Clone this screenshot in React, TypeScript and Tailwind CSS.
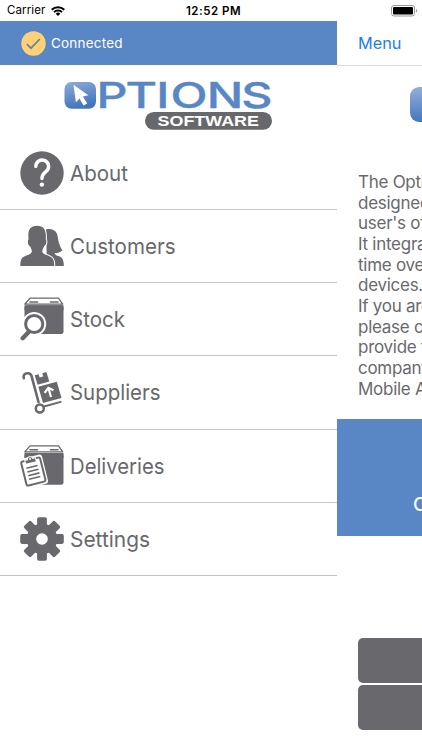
import type { ReactNode } from "react";

const GREY = "#69696d";
const BLUE = "#5987c5";

function AboutIcon() {
  return (
    <svg viewBox="0 0 44 44" className="h-11 w-11" aria-hidden>
      <circle cx="22" cy="22" r="21.7" fill={GREY} />
      <path
        d="M15.800 15.400a6.400 6.400 0 1 1 10.400 5c-2.600 2.100-4.300 3.100-4.300 7.200"
        fill="none"
        stroke="#fff"
        strokeWidth="3.400"
        strokeLinecap="round"
      />
      <circle cx="21.900" cy="33.600" r="2.200" fill="#fff" />
    </svg>
  );
}

function CustomersIcon() {
  return (
    <svg viewBox="0 0 44 44" className="h-11 w-11" fill={GREY} aria-hidden>
      <path d="M26 5.500c6-1.600 11 1.300 11.700 7 .5 4.500 1.900 10 4.700 14-1.700 1.700-4.700 2.600-7.700 2.600 0 1.700 1.600 2.300 3.700 3 3.300 1.100 5.300 3 5.500 9.900H27z" />
      <path
        d="M.3 42c0-6.200 1-8.600 5.500-10.300 3.200-1.200 5.700-1.700 6-4.200.2-1.700-1-3.200-1.700-5.300-1.500-.4-2.300-2.200-2.200-5 0-1 .4-1.500.7-1.900C7.500 7 9.500 1.800 17 1.800S26.600 7 25.700 15.300c.5.500.8 1.200.7 2.300-.1 2.600-1.200 4.200-2.300 4.700-.8 2.200-2 3.500-1.800 5.200.3 2.500 3 3 6.200 4.200 4.500 1.700 5.800 4.100 5.800 10.300z"
        stroke="#fff"
        strokeWidth="2"
        paintOrder="stroke"
      />
    </svg>
  );
}

function BoxShape({ bottom }: { bottom: number }) {
  return (
    <>
      <path d="M10 1.200h28.500l4.200 6H4.800z" fill="#fff" stroke={GREY} strokeWidth="1.300" strokeLinejoin="round" />
      <path d="M10 5h7.500M30.500 5h7.500" stroke={GREY} strokeWidth="1.600" strokeLinecap="round" />
      <rect x="4.500" y="8.200" width="39" height={bottom - 8.2} rx="2.500" fill={GREY} />
      <path d="M4.500 8.200h39v5h-39z" fill={GREY} />
    </>
  );
}

function StockIcon() {
  return (
    <svg viewBox="0 0 44 44" className="h-11 w-11" aria-hidden>
      <BoxShape bottom={37} />
      <circle cx="14.200" cy="27" r="12" fill="#fff" />
      <path d="M9 33l-7 8" stroke="#fff" strokeWidth="7" />
      <circle cx="14.200" cy="27" r="8.600" fill="#fff" stroke={GREY} strokeWidth="3" />
      <path d="M8.200 35.500l-5.500 5.700" stroke={GREY} strokeWidth="4.400" strokeLinecap="round" />
    </svg>
  );
}

function SuppliersIcon() {
  return (
    <svg viewBox="0 0 44 44" className="h-11 w-11" fill="none" aria-hidden>
      <path
        d="M3.800 8.300C3 4.800 4.600 3.500 7.500 3.200c2.300-.2 3.400.7 4 2.600L18.500 32"
        stroke={GREY}
        strokeWidth="2.600"
        strokeLinecap="round"
      />
      <path d="M14.700 5.300l4-1.100.9 3.200 3.600-1-.9-3.200 4.100-1.100 2.900 9.500-11.700 3.200z" fill={GREY} />
      <path d="M18.300 16.700l18.500-5 4.700 16.200-18.500 5z" fill={GREY} />
      <path d="M31 27l-2.400-8.300m-4 4.100l3.700-5 5.200 2.500" stroke="#fff" strokeWidth="2.200" />
      <path d="M24 36.500l16.700-4.600" stroke={GREY} strokeWidth="2" strokeLinecap="round" />
      <circle cx="19.800" cy="38.500" r="4" stroke={GREY} strokeWidth="2.500" />
    </svg>
  );
}

function DeliveriesIcon() {
  return (
    <svg viewBox="0 0 44 44" className="h-11 w-11" aria-hidden>
      <g transform="translate(0 .7)">
        <BoxShape bottom={40} />
      </g>
      <g transform="rotate(-14 13 28)">
        <rect x="1.500" y="12.500" width="24" height="30" rx="3" fill="#fff" />
        <rect x="3.700" y="15.300" width="19.500" height="24.700" rx="1.800" fill="#fff" stroke={GREY} strokeWidth="2" />
        <path
          d="M7.800 18.800v-4h2.700c.1-3.200 5.400-3.200 5.500 0h2.800v4z"
          fill={GREY}
          stroke="#fff"
          strokeWidth="1"
        />
        <circle cx="13.300" cy="14.600" r="1" fill="#fff" />
        <path d="M7.500 22.800h11.500M7.500 26.600h11.500M7.500 30.400h11.500M7.500 34.200h11.500" stroke={GREY} strokeWidth="1.600" />
      </g>
    </svg>
  );
}

function SettingsIcon() {
  return (
    <svg viewBox="0 0 44 44" className="h-11 w-11" fill={GREY} aria-hidden>
      {[0, 45, 90, 135].map((angle) => (
        <rect key={angle} x="17.100" y="0.200" width="9.800" height="43.600" rx="1.800" transform={`rotate(${angle} 22 22)`} />
      ))}
      <circle cx="22" cy="22" r="15.300" />
      <circle cx="22" cy="22" r="5.800" fill="#fff" />
    </svg>
  );
}

const menuItems: { label: string; icon: ReactNode; width: number }[] = [
  { label: "About", icon: <AboutIcon />, width: 58 },
  { label: "Customers", icon: <CustomersIcon />, width: 105.5 },
  { label: "Stock", icon: <StockIcon />, width: 55 },
  { label: "Suppliers", icon: <SuppliersIcon />, width: 90.5 },
  { label: "Deliveries", icon: <DeliveriesIcon />, width: 94.5 },
  { label: "Settings", icon: <SettingsIcon />, width: 80 },
];

const aboutLines = [
  "The Options",
  "designed for",
  "user's of the",
  "It integrates",
  "time over",
  "devices.",
  "If you are",
  "please contact",
  "provide the",
  "company",
  "Mobile App",
];

function StatusBar() {
  return (
    <div className="flex h-[21px] items-center justify-between bg-white pr-1 pl-[7px] text-black">
      <div className="flex w-32 items-center gap-1.5 pt-px text-[11.500px]">
        <span className="tracking-[0.100px]">Carrier</span>
        <svg viewBox="0 0 14 10" className="h-2.5 w-3.5" fill="none" stroke="#000" strokeWidth="2" aria-hidden>
          <path d="M.7 3.700a9 9 0 0 1 12.600 0M3 6.100a5.700 5.700 0 0 1 8 0" />
          <path d="M4.700 7.700a3.300 3.300 0 0 1 4.600 0L7 10z" fill="#000" stroke="none" />
        </svg>
      </div>
      <span className="pt-[2px] pl-[2px] text-[11.500px] font-semibold tracking-[0.500px]">12:52 PM</span>
      <div className="flex w-32 justify-end">
        <svg viewBox="0 0 27 12" className="h-3 w-[27px]" aria-hidden>
          <rect x=".5" y=".5" width="23" height="10.500" rx="2.500" fill="#fff" stroke="#999" />
          <rect x="2" y="2" width="20" height="7.500" rx="1.200" />
          <path d="M25 4v3.500c1.500-.5 1.500-3 0-3.500" fill="#999" />
        </svg>
      </div>
    </div>
  );
}

function Logo() {
  return (
    <svg viewBox="0 0 216 58" className="h-[58px] w-[216px]" role="img" aria-label="Options Software">
      <defs>
        <linearGradient id="tile" x1="0" y1="0" x2="0.300" y2="1">
          <stop offset="0" stopColor="#8fabd9" />
          <stop offset="1" stopColor="#4377bd" />
        </linearGradient>
      </defs>
      <rect x="4.500" y="6" width="31.500" height="26.700" rx="7" fill="url(#tile)" />
      <path d="M13.500 8.800L28.300 19.300l-5.400 1.200 4.300 7-3.700 2.100-4-7-3.600 3.700z" fill="#fff" />
      {/* each glyph has its own x, the wordmark is wider than the typeface */}
      <text
        transform="scale(1.360 1)"
        x="26.800 48.200 70.800 81.200 107.900 133.300"
        y="32.200"
        fill={BLUE}
        stroke={BLUE}
        strokeWidth="0.400"
        fontFamily="Inter, sans-serif"
        fontWeight="500"
        fontSize="35.500"
      >
        PTIONS
      </text>
      <rect x="85" y="36" width="127" height="17.800" rx="8.900" fill="#67686b" />
      <text
        x="97.500"
        y="50.300"
        textLength="101.500"
        lengthAdjust="spacingAndGlyphs"
        fill="#fff"
        fontFamily="Liberation Sans, sans-serif"
        fontWeight="700"
        fontSize="15.300"
      >
        SOFTWARE
      </text>
    </svg>
  );
}

export default function App() {
  return (
    <div className="flex h-[750px] w-[422px] flex-col overflow-hidden bg-white font-['Inter',sans-serif]">
      <StatusBar />
      <div className="flex min-h-0 flex-1">
        <aside className="w-[337px] shrink-0">
          <header className="flex h-[44px] items-center gap-[5px] bg-[#5987c5] pl-[21px] text-white">
            <svg viewBox="0 0 25 25" className="h-[25px] w-[25px]" fill="none" aria-hidden>
              <circle cx="12.500" cy="12.500" r="12.200" fill="#fed176" />
              <path d="M5.800 13.200l4.200 4 8.800-9.200" stroke="#6f7f96" strokeWidth="1.700" />
            </svg>
            <span className="text-[13.500px] tracking-[0.200px]">Connected</span>
          </header>
          <div className="flex h-[71.500px] pt-[11px] pl-[60px]">
            <Logo />
          </div>
          <nav>
            {menuItems.map((item) => (
              <div
                key={item.label}
                className="flex h-[73.250px] items-center border-b border-[#c4c4c8] pl-[20px]"
              >
                {item.icon}
                <svg viewBox="0 0 120 32" className="ml-1.5 h-8 w-[120px] overflow-visible">
                  <text y="23.900" textLength={item.width} fill={GREY} fontSize="22" lengthAdjust="spacingAndGlyphs">
                    {item.label}
                  </text>
                </svg>
              </div>
            ))}
          </nav>
        </aside>
        <main className="w-[85px] shrink-0 overflow-hidden">
          <div className="flex h-[45px] items-center border-b border-[#dcdce0] pl-[21px] text-[16.300px] text-[#1c7df0]">
            Menu
          </div>
          <div className="flex h-[106px] pt-[21px] pl-[73px]">
            <div className="h-[35px] w-[44px] shrink-0 rounded-[9px] bg-linear-to-b from-[#94aedb] to-[#4377bd]" />
          </div>
          <div className="h-[247px] pl-[21px] text-[17px] leading-[20.650px] tracking-[-0.270px] whitespace-nowrap text-[#69696d]">
            {aboutLines.map((line) => (
              <p key={line}>{line}</p>
            ))}
          </div>
          <div className="flex h-[117px] items-end bg-[#5987c5] pb-[17px] pl-[76px] text-[19px] font-medium whitespace-nowrap text-white">
            Options
          </div>
          <div className="flex w-[200px] flex-col gap-[2px] pt-[101.600px] pl-[20.500px]">
            <div className="h-[45px] rounded-[5px] bg-[#69696d]" />
            <div className="h-[45px] rounded-[5px] bg-[#69696d]" />
          </div>
        </main>
      </div>
    </div>
  );
}
